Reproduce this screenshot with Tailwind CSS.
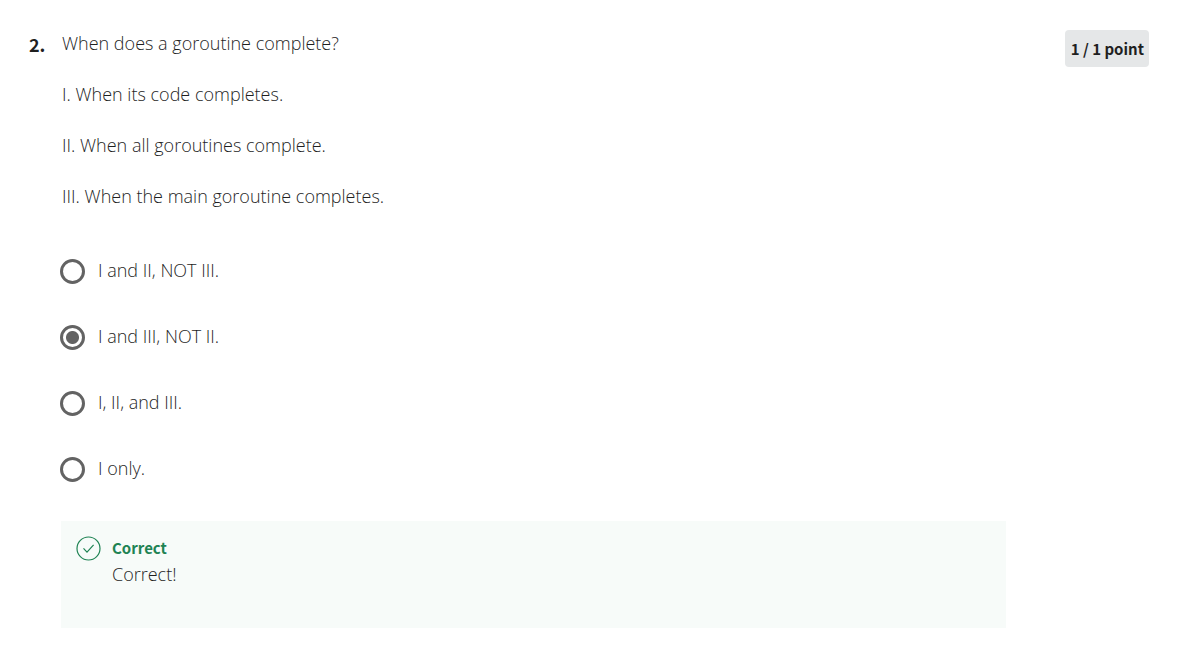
<!DOCTYPE html>
<html lang="en">
<head>
<meta charset="utf-8">
<meta name="viewport" content="width=device-width, initial-scale=1">
<title>Quiz question</title>
<script src="https://cdn.jsdelivr.net/npm/@tailwindcss/browser@4"></script>
</head>
<body class="bg-white font-['Open_Sans',sans-serif] text-lg leading-[27px] font-light text-[#1f1f1f]">
<main class="flex items-start pt-[30px] pr-[29px] pl-[29px]">
  <span class="w-8 shrink-0 pt-px font-['Noto_Sans_CJK_SC',sans-serif] text-lg leading-[27px] font-bold">2.</span>
  <div class="min-w-0 flex-1">
    <fieldset>
      <legend class="flex flex-col gap-6 pl-px">
        <p>When does a goroutine complete?</p>
        <p>I. When its code completes.</p>
        <p>II. When all goroutines complete.</p>
        <p>III. When the main goroutine completes.</p>
      </legend>
      <div class="flex flex-col items-start gap-[39px] pt-[47px]">
        <label class="flex gap-[13px]"><input type="radio" name="answer" disabled class="mt-0.5 -ml-px size-[25px] appearance-none rounded-full border-3 border-[#636363] checked:bg-[radial-gradient(circle,#636363_6px,transparent_7px)]"><span>I and II, NOT III.</span></label>
        <label class="flex gap-[13px]"><input type="radio" name="answer" checked disabled class="mt-0.5 -ml-px size-[25px] appearance-none rounded-full border-3 border-[#636363] checked:bg-[radial-gradient(circle,#636363_6px,transparent_7px)]"><span>I and III, NOT II.</span></label>
        <label class="flex gap-[13px]"><input type="radio" name="answer" disabled class="mt-0.5 -ml-px size-[25px] appearance-none rounded-full border-3 border-[#636363] checked:bg-[radial-gradient(circle,#636363_6px,transparent_7px)]"><span>I, II, and III.</span></label>
        <label class="flex gap-[13px]"><input type="radio" name="answer" disabled class="mt-0.5 -ml-px size-[25px] appearance-none rounded-full border-3 border-[#636363] checked:bg-[radial-gradient(circle,#636363_6px,transparent_7px)]"><span>I only.</span></label>
      </div>
    </fieldset>
    <section class="mt-[39px] flex gap-[11px] bg-[#f7fbf9] px-[15px] pt-[13px] pb-10">
      <svg class="mt-0.5 size-[25px]" viewBox="0 0 25 25" fill="none" stroke="#1f8354" stroke-width="1.2"><circle cx="12.5" cy="12.5" r="11.5"/><path d="M7.5 12.4l3.5 3.8 6.6-7.4"/></svg>
      <div><h2 class="font-['Noto_Sans_CJK_SC',sans-serif] text-[15px] leading-[27px] font-bold text-[#1f8354]">Correct</h2><p>Correct!</p></div>
    </section>
  </div>
  <div class="ml-[59px] rounded-sm bg-[#e5e7e8] py-[5px] pr-[5px] pl-1.5 font-['Noto_Sans_CJK_SC',sans-serif] text-[15px] leading-[27px] font-bold">1 / 1 point</div>
</main>
</body>
</html>
